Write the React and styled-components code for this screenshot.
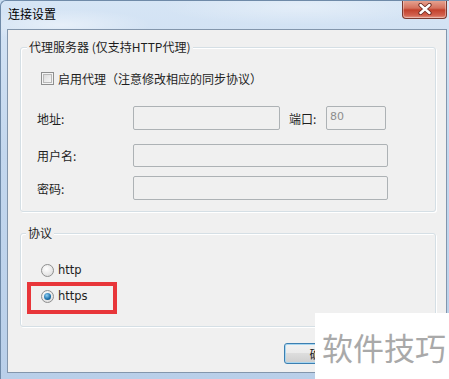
import React from "react";
import styled, { createGlobalStyle } from "styled-components";

const GlobalStyle = createGlobalStyle`
  html, body {
    margin: 0;
    padding: 0;
    background: #c8dcf0;
  }
  body {
    font-family: "Noto Sans CJK SC", "Noto Sans", sans-serif;
    font-size: 12px;
    color: #1e1e1e;
  }
`;

const Window = styled.div`
  position: relative;
  width: 449px;
  height: 379px;
  overflow: hidden;
  display: flex;
  flex-direction: column;
  box-sizing: border-box;
  border-top-left-radius: 6px;
  background:
    radial-gradient(ellipse 90px 16px at 60px 24px, rgba(255, 255, 255, 0.45), transparent),
    radial-gradient(ellipse 140px 18px at 300px 6px, rgba(255, 255, 255, 0.35), transparent),
    linear-gradient(180deg, #d6e5f5 0%, #c3d7ee 40%, #b9cfe9 100%);
  border-left: 1px solid #6f8aa8;
  border-top: 1px solid #6f8aa8;
`;

const TitleBar = styled.div`
  height: 28px;
  display: flex;
  justify-content: space-between;
  align-items: flex-start;
  flex-shrink: 0;
`;

const Title = styled.div`
  padding: 5px 0 0 7px;
  font-size: 12px;
  line-height: 16px;
  color: #000;
`;

const CloseButton = styled.div`
  width: 45px;
  height: 19px;
  margin-right: 2px;
  margin-top: -1px;
  box-sizing: border-box;
  border: 1px solid #7a3a30;
  border-top: none;
  border-radius: 0 0 4px 4px;
  background: linear-gradient(180deg, #e8a896 0%, #d4715d 45%, #c2412c 55%, #d2614e 85%, #e49a88 100%);
  box-shadow: inset 0 0 0 1px rgba(255, 255, 255, 0.35);
  display: flex;
  align-items: center;
  justify-content: center;
`;

const Content = styled.div`
  flex: 1;
  margin: 0 2px 6px 6px;
  border: 1px solid #8396ac;
  background: #f0f0f0;
  padding: 17px 0 0 12px;
  display: flex;
  flex-direction: column;
`;

const Group = styled.div`
  position: relative;
  width: 416px;
  height: ${(p) => p.height}px;
  box-sizing: border-box;
  border: 1px solid #d5dfe5;
  border-radius: 3px;
  box-shadow: inset 1px 1px 0 #fff, 1px 1px 0 #fff;
  margin-top: ${(p) => p.top || 0}px;
`;

const Legend = styled.span`
  position: absolute;
  top: -9px;
  left: ${(p) => p.left}px;
  padding: 0 2px;
  background: #f0f0f0;
  line-height: 16px;
  color: #1e1e1e;
`;

const CheckRow = styled.label`
  display: flex;
  align-items: center;
  gap: 4px;
  margin: 24px 0 0 20px;
  height: 13px;
  line-height: 13px;
`;

const CheckBox = styled.span`
  width: 13px;
  height: 13px;
  box-sizing: border-box;
  border: 1px solid #8e8f8f;
  background: #f4f4f4;
  display: flex;
  align-items: center;
  justify-content: center;
  &::after {
    content: "";
    width: 9px;
    height: 9px;
    border: 1px solid #b9b9b9;
    box-sizing: border-box;
    background: linear-gradient(135deg, #dcdcdc, #f6f6f6);
  }
`;

const FormRow = styled.div`
  display: flex;
  align-items: center;
  margin-top: ${(p) => p.top}px;
  padding-left: 16px;
`;

const Label = styled.span`
  width: ${(p) => p.width || 96}px;
  margin-left: ${(p) => p.gap || 0}px;
  flex-shrink: 0;
  color: #1e1e1e;
`;

const Input = styled.div`
  width: ${(p) => p.width}px;
  height: ${(p) => p.height || 24}px;
  box-sizing: border-box;
  border: 1px solid #adb2b5;
  border-radius: 2px;
  background: #f0f0f0;
  color: #8d8d8d;
  padding-left: 3px;
  line-height: 20px;
  font-family: "DejaVu Sans", sans-serif;
  font-size: 11px;
`;

const RadioRow = styled.label`
  display: flex;
  align-items: center;
  gap: 4px;
  margin: ${(p) => p.top}px 0 0 20px;
  height: 13px;
  line-height: 13px;
  font-family: "DejaVu Sans", sans-serif;
  font-size: 11.5px;
  color: #1e1e1e;
`;

const Radio = styled.span`
  width: 13px;
  height: 13px;
  box-sizing: border-box;
  border-radius: 50%;
  border: 1px solid #8e8f8f;
  background: radial-gradient(circle at 40% 35%, #ffffff, #d6d6d6);
  display: flex;
  align-items: center;
  justify-content: center;
  &::after {
    content: "";
    display: ${(p) => (p.checked ? "block" : "none")};
    width: 7px;
    height: 7px;
    border-radius: 50%;
    background: radial-gradient(circle at 40% 35%, #8fd0f5, #1a6ea8 60%, #0d3f66);
  }
`;

const ButtonRow = styled.div`
  display: flex;
  justify-content: flex-end;
  margin-top: 16px;
  padding-right: 87px;
`;

const Button = styled.div`
  width: 75px;
  height: 21px;
  box-sizing: border-box;
  border: 1px solid #3c7fb1;
  border-radius: 3px;
  background: linear-gradient(180deg, #f2f2f2 0%, #ebebeb 45%, #dddddd 50%, #cfcfcf 100%);
  box-shadow: inset 0 0 0 1px #a8d6f0;
  text-align: center;
  line-height: 19px;
`;

const Highlight = styled.div`
  position: absolute;
  left: 26px;
  top: 281px;
  width: 90px;
  height: 32px;
  box-sizing: border-box;
  border: 4px solid #e8363a;
`;

const Watermark = styled.div`
  position: absolute;
  left: 314px;
  top: 312px;
  right: 0;
  bottom: 0;
  background: #fff;
  color: #a9a9a9;
  font-size: 31px;
  line-height: 31px;
  padding: 18px 0 0 7px;
  white-space: nowrap;
`;

const CloseIcon = () => (
  <svg width="14" height="12" viewBox="0 0 14 12">
    <path d="M2.5 2 L11.5 10 M11.5 2 L2.5 10" stroke="#6b2a22" strokeWidth="4.2" strokeLinecap="round" />
    <path d="M2.5 2 L11.5 10 M11.5 2 L2.5 10" stroke="#ffffff" strokeWidth="2.4" strokeLinecap="round" />
  </svg>
);

export default function App() {
  return (
    <>
      <GlobalStyle />
      <Window>
        <TitleBar>
          <Title>连接设置</Title>
          <CloseButton>
            <CloseIcon />
          </CloseButton>
        </TitleBar>
        <Content>
          <Group height={165}>
            <Legend left={6}>代理服务器 (仅支持HTTP代理)</Legend>
            <CheckRow>
              <CheckBox />
              启用代理（注意修改相应的同步协议）
            </CheckRow>
            <FormRow top={21}>
              <Label>地址:</Label>
              <Input width={147} />
              <Label width={37} gap={9}>端口:</Label>
              <Input width={60}>80</Input>
            </FormRow>
            <FormRow top={14}>
              <Label>用户名:</Label>
              <Input width={255} height={23} />
            </FormRow>
            <FormRow top={9}>
              <Label>密码:</Label>
              <Input width={255} />
            </FormRow>
          </Group>
          <Group height={94} top={21}>
            <Legend left={5}>协议</Legend>
            <RadioRow top={30}>
              <Radio />
              http
            </RadioRow>
            <RadioRow top={13}>
              <Radio checked />
              https
            </RadioRow>
          </Group>
          <ButtonRow>
            <Button>确定</Button>
          </ButtonRow>
        </Content>
        <Highlight />
        <Watermark>软件技巧</Watermark>
      </Window>
    </>
  );
}
